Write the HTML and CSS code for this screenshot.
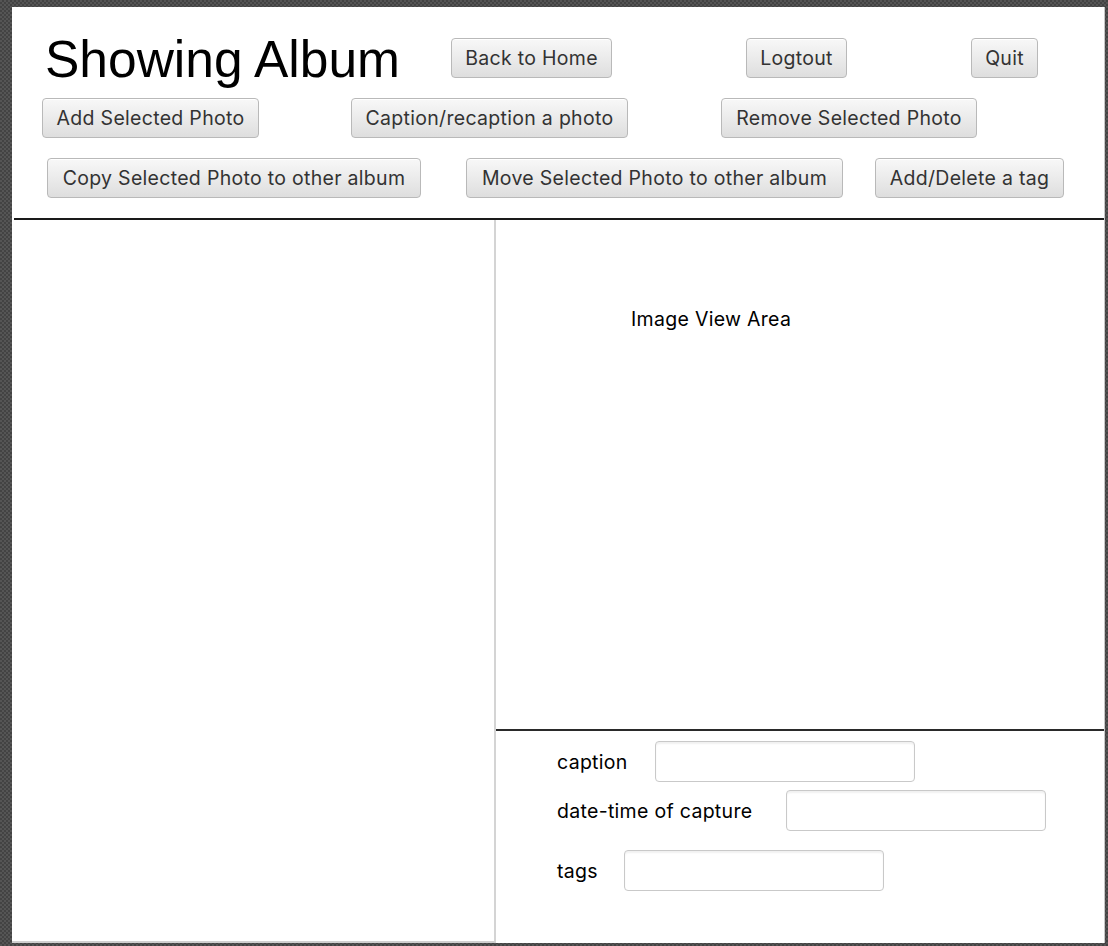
FILE: index.html
```html
<!DOCTYPE html>
<html>
<head>
<meta charset="utf-8">
<link rel="stylesheet" href="styles.css">
</head>
<body>
<div class="window">
  <header class="header">
    <div class="row">
      <h1 class="title">Showing Album</h1>
      <button class="btn b-back">Back to Home</button>
      <button class="btn b-logout">Logtout</button>
      <button class="btn b-quit">Quit</button>
    </div>
    <div class="row">
      <button class="btn b-add">Add Selected Photo</button>
      <button class="btn b-caption">Caption/recaption a photo</button>
      <button class="btn b-remove">Remove Selected Photo</button>
    </div>
    <div class="row">
      <button class="btn b-copy">Copy Selected Photo to other album</button>
      <button class="btn b-move">Move Selected Photo to other album</button>
      <button class="btn b-tag">Add/Delete a tag</button>
    </div>
  </header>
  <main class="main">
    <section class="list-panel"></section>
    <section class="detail-panel">
      <div class="image-area">
        <span class="image-label">Image View Area</span>
      </div>
      <div class="form">
        <div class="frow r-caption">
          <label class="lbl l-caption">caption</label>
          <input class="field" type="text">
        </div>
        <div class="frow r-date">
          <label class="lbl l-date">date-time of capture</label>
          <input class="field" type="text">
        </div>
        <div class="frow r-tags">
          <label class="lbl l-tags">tags</label>
          <input class="field" type="text">
        </div>
      </div>
    </section>
  </main>
</div>
</body>
</html>
```

FILE: styles.css
```css
* { box-sizing: border-box; }
html, body { margin: 0; padding: 0; }
body {
  width: 1108px;
  height: 946px;
  overflow: hidden;
  background-color: #4b4b4b;
  background-image: repeating-conic-gradient(#434343 0 25%, #555555 0 50%);
  background-size: 4px 4px;
  padding: 7px 4px 3px 12px;
  font-family: Inter, "Liberation Sans", sans-serif;
}
.window {
  width: 1093px;
  height: 936px;
  background: #fff;
  border-right: 1px solid #c8c8c8;
  display: flex;
  flex-direction: column;
}
.header {
  height: 213px;
  padding-top: 31px;
  display: flex;
  flex-direction: column;
  gap: 20px;
  border-bottom: 2px solid #1a1a1a;
  margin-left: 2px;
}
.row {
  display: flex;
  align-items: center;
  height: 40px;
}
.title {
  margin: 2px 0 0 31px;
  width: 406px;
  font-family: "Liberation Sans", Arial, sans-serif;
  font-weight: normal;
  font-size: 51.5px;
  line-height: 40px;
  color: #000;
}
.btn {
  height: 40px;
  padding: 0;
  border: 1px solid #b9b9b9;
  border-radius: 4px;
  background: linear-gradient(#f8f8f8, #dedede);
  box-shadow: inset 0 1px 0 #fff;
  color: #333;
  font-family: Inter, "Liberation Sans", sans-serif;
  font-size: 19.5px;
  letter-spacing: 0.3px;
  text-align: center;
  white-space: nowrap;
}
.b-back { width: 161px; }
.b-logout { margin-left: 134px; width: 101px; }
.b-quit { margin-left: 124px; width: 67px; }
.b-add { margin-left: 28px; width: 217px; }
.b-caption { margin-left: 92px; width: 277px; }
.b-remove { margin-left: 93px; width: 256px; }
.b-copy { margin-left: 33px; width: 374px; }
.b-move { margin-left: 45px; width: 377px; }
.b-tag { margin-left: 32px; width: 189px; }
.main {
  flex: 1;
  display: flex;
}
.list-panel {
  width: 484px;
  border-right: 2px solid #d4d4d4;
  border-bottom: 2px solid #d0d0d0;
}
.detail-panel {
  flex: 1;
  display: flex;
  flex-direction: column;
}
.image-area {
  height: 511px;
  border-bottom: 2px solid #2a2a2a;
  padding: 88px 0 0 135px;
}
.image-label {
  font-size: 19.5px;
  letter-spacing: 0.3px;
  color: #000;
  line-height: 22px;
}
.form {
  flex: 1;
  padding: 10px 0 0 61px;
  display: flex;
  flex-direction: column;
}
.frow {
  display: flex;
  align-items: center;
}
.r-date { margin-top: 8px; }
.r-tags { margin-top: 19px; }
.lbl {
  font-size: 19.5px;
  letter-spacing: 0.3px;
  color: #000;
}
.l-caption { width: 98px; }
.l-date { width: 229px; }
.l-tags { width: 67px; }
.field {
  width: 260px;
  height: 41px;
  border: 1px solid #c9c9c9;
  border-radius: 4px;
  background: #fff;
  box-shadow: inset 0 2px 2px rgba(0,0,0,0.06);
  font-size: 16px;
  padding: 0 8px;
  outline: none;
}
```
